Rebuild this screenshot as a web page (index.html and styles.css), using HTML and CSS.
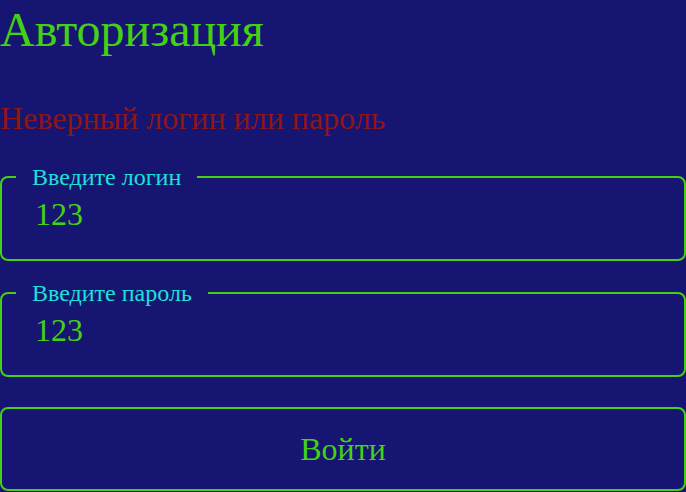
FILE: index.html
```html
<!DOCTYPE html>
<html lang="ru">
<head>
<meta charset="utf-8">
<title>Авторизация</title>
<link rel="stylesheet" href="styles.css">
</head>
<body>
<main class="page">
  <h1 class="title">Авторизация</h1>
  <p class="error">Неверный логин или пароль</p>
  <form class="form">
    <fieldset class="field">
      <legend class="field-label">Введите логин</legend>
      <input class="field-input" type="text" value="123">
    </fieldset>
    <fieldset class="field">
      <legend class="field-label">Введите пароль</legend>
      <input class="field-input" type="text" value="123">
    </fieldset>
    <button class="submit" type="button">Войти</button>
  </form>
</main>
</body>
</html>
```
FILE: styles.css
```css
html, body {
  margin: 0;
  padding: 0;
  background: #161672;
  height: 100%;
}
body {
  font-family: "Liberation Serif", "Times New Roman", serif;
  overflow: hidden;
}
.page {
  display: flex;
  flex-direction: column;
}
.title {
  margin: 0;
  font-size: 48px;
  font-weight: normal;
  line-height: 60px;
  color: #44d114;
}
.error {
  margin: 40px 0 0 0;
  font-size: 32px;
  line-height: 36px;
  color: #8e1515;
}
.form {
  display: flex;
  flex-direction: column;
  gap: 19px;
  margin-top: 28px;
}
.field {
  margin: 0;
  padding: 4px 0 25px 14px;
  border: 2px solid #44d114;
  border-radius: 8px;
  min-width: 0;
}
.field-label {
  padding: 0 16px;
  font-size: 24px;
  line-height: 26px;
  color: #1fe0d8;
}
.field-input {
  display: block;
  width: 100%;
  box-sizing: border-box;
  background: transparent;
  border: none;
  outline: none;
  padding: 0 0 0 19px;
  font-family: "Liberation Serif", "Times New Roman", serif;
  font-size: 32px;
  line-height: 40px;
  height: 40px;
  color: #44d114;
}
.submit {
  margin-top: 11px;
  height: 84px;
  background: transparent;
  border: 2px solid #44d114;
  border-radius: 8px;
  font-family: "Liberation Serif", "Times New Roman", serif;
  font-size: 32px;
  color: #44d114;
  padding: 0;
}
```
